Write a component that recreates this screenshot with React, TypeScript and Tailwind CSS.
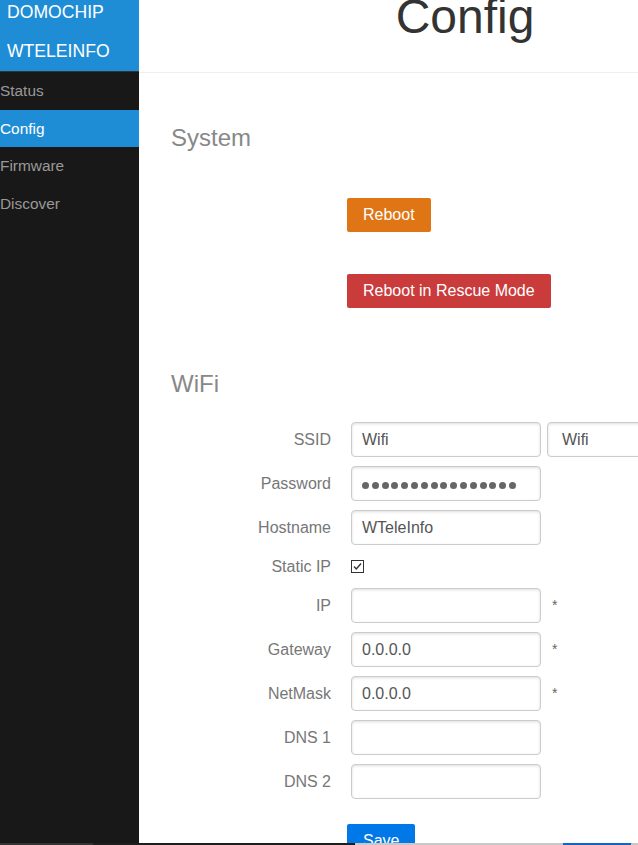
import React from 'react';

const menu = [
  { label: 'Status', active: false },
  { label: 'Config', active: true },
  { label: 'Firmware', active: false },
  { label: 'Discover', active: false },
];

function Field({ label, value, star, children }: { label: string; value?: string; star?: boolean; children?: React.ReactNode }) {
  return (
    <div className="flex items-center h-[35px]">
      <label className="w-[160px] text-right text-[16px] text-[#777]">{label}</label>
      <input
        type="text"
        readOnly
        value={value ?? ''}
        className="ml-[20px] w-[190px] h-[35px] border border-[#ccc] rounded-[4px] shadow-[inset_0_1px_3px_#ddd] pl-[10px] text-[16px] text-[#555] outline-none bg-white"
      />
      {star && <span className="ml-[11px] text-[14px] text-[#666]">*</span>}
      {children}
    </div>
  );
}

export default function App() {
  return (
    <div className="relative flex h-[845px] w-[638px] overflow-hidden bg-white font-['Liberation_Sans',Arial,sans-serif]">
      {/* Side menu */}
      <aside className="w-[139px] shrink-0 bg-[#191818]">
        <div className="h-[71px] bg-[#1f8dd6] pl-[7px] text-[17.6px] text-white">
          <div className="leading-[24px]">DOMOCHIP</div>
          <div className="mt-[15px] leading-[24px]">WTELEINFO</div>
        </div>
        <ul className="border-t border-[#333]">
          {menu.map((m) => (
            <li
              key={m.label}
              className={`h-[37.5px] flex items-center text-[15.4px] ${m.active ? 'bg-[#1f8dd6] text-white' : 'text-[#999]'}`}
            >
              {m.label}
            </li>
          ))}
        </ul>
      </aside>

      {/* Main */}
      <main className="w-[652px] shrink-0">
        <header className="h-[73px] border-b border-[#eee] text-center overflow-hidden">
          <h1 className="-mt-[7px] text-[48px] leading-[48px] text-[#333]">Config</h1>
        </header>

        <div className="pl-[32px]">
          <h2 className="mt-[51px] text-[24px] leading-[28px] text-[#888]">System</h2>

          <div className="ml-[176px] mt-[46px]">
            <button className="h-[34px] px-[16px] rounded-[2px] bg-[#df7514] text-[16px] text-white">Reboot</button>
          </div>
          <div className="ml-[176px] mt-[42px]">
            <button className="h-[34px] px-[16px] rounded-[2px] bg-[#ca3c3c] text-[16px] text-white">Reboot in Rescue Mode</button>
          </div>

          <h2 className="mt-[62px] text-[24px] leading-[28px] text-[#888]">WiFi</h2>

          <form className="mt-[24px] flex flex-col gap-[9px]">
            <Field label="SSID" value="Wifi">
              <div className="ml-[6px] w-[190px] h-[35px] border border-[#ccc] rounded-[4px] shadow-[inset_0_1px_3px_#ddd] pl-[14px] flex items-center text-[16px] text-[#555]">
                Wifi
              </div>
            </Field>

            <div className="flex items-center h-[35px]">
              <label className="w-[160px] text-right text-[16px] text-[#777]">Password</label>
              <div className="ml-[20px] w-[190px] h-[35px] border border-[#ccc] rounded-[4px] shadow-[inset_0_1px_3px_#ddd] pl-[10px] pt-[3px] flex items-center gap-[2.8px]">
                {Array.from({ length: 16 }).map((_, i) => (
                  <span key={i} className="w-[7px] h-[7px] rounded-full bg-[#666]" />
                ))}
              </div>
            </div>

            <Field label="Hostname" value="WTeleInfo" />

            <div className="flex items-center h-[25px]">
              <label className="w-[160px] text-right text-[16px] text-[#777]">Static IP</label>
              <span className="ml-[20px] w-[13px] h-[13px] border border-[#333] bg-white flex items-center justify-center">
                <svg width="11" height="11" viewBox="0 0 11 11">
                  <path d="M2 5.5 L4.3 8 L9 2.5" fill="none" stroke="#333" strokeWidth="1.4" />
                </svg>
              </span>
            </div>

            <Field label="IP" star />
            <Field label="Gateway" value="0.0.0.0" star />
            <Field label="NetMask" value="0.0.0.0" star />
            <Field label="DNS 1" />
            <Field label="DNS 2" />

            <div className="ml-[176px] mt-[16px]">
              <button type="button" className="h-[34px] px-[16px] rounded-[2px] bg-[#0078e7] text-[16px] text-white">Save</button>
            </div>
          </form>
        </div>
      </main>

      {/* bottom strip */}
      <div className="absolute bottom-0 left-0 right-0 h-[2px] flex">
        <div className="w-[93px] bg-[#333]" />
        <div className="w-[262px] bg-[#1e1e1e]" />
        <div className="w-[208px] bg-[#c8c8c8]" />
        <div className="w-[68px] bg-[#1565c0]" />
        <div className="flex-1 bg-[#c8c8c8]" />
      </div>
    </div>
  );
}
